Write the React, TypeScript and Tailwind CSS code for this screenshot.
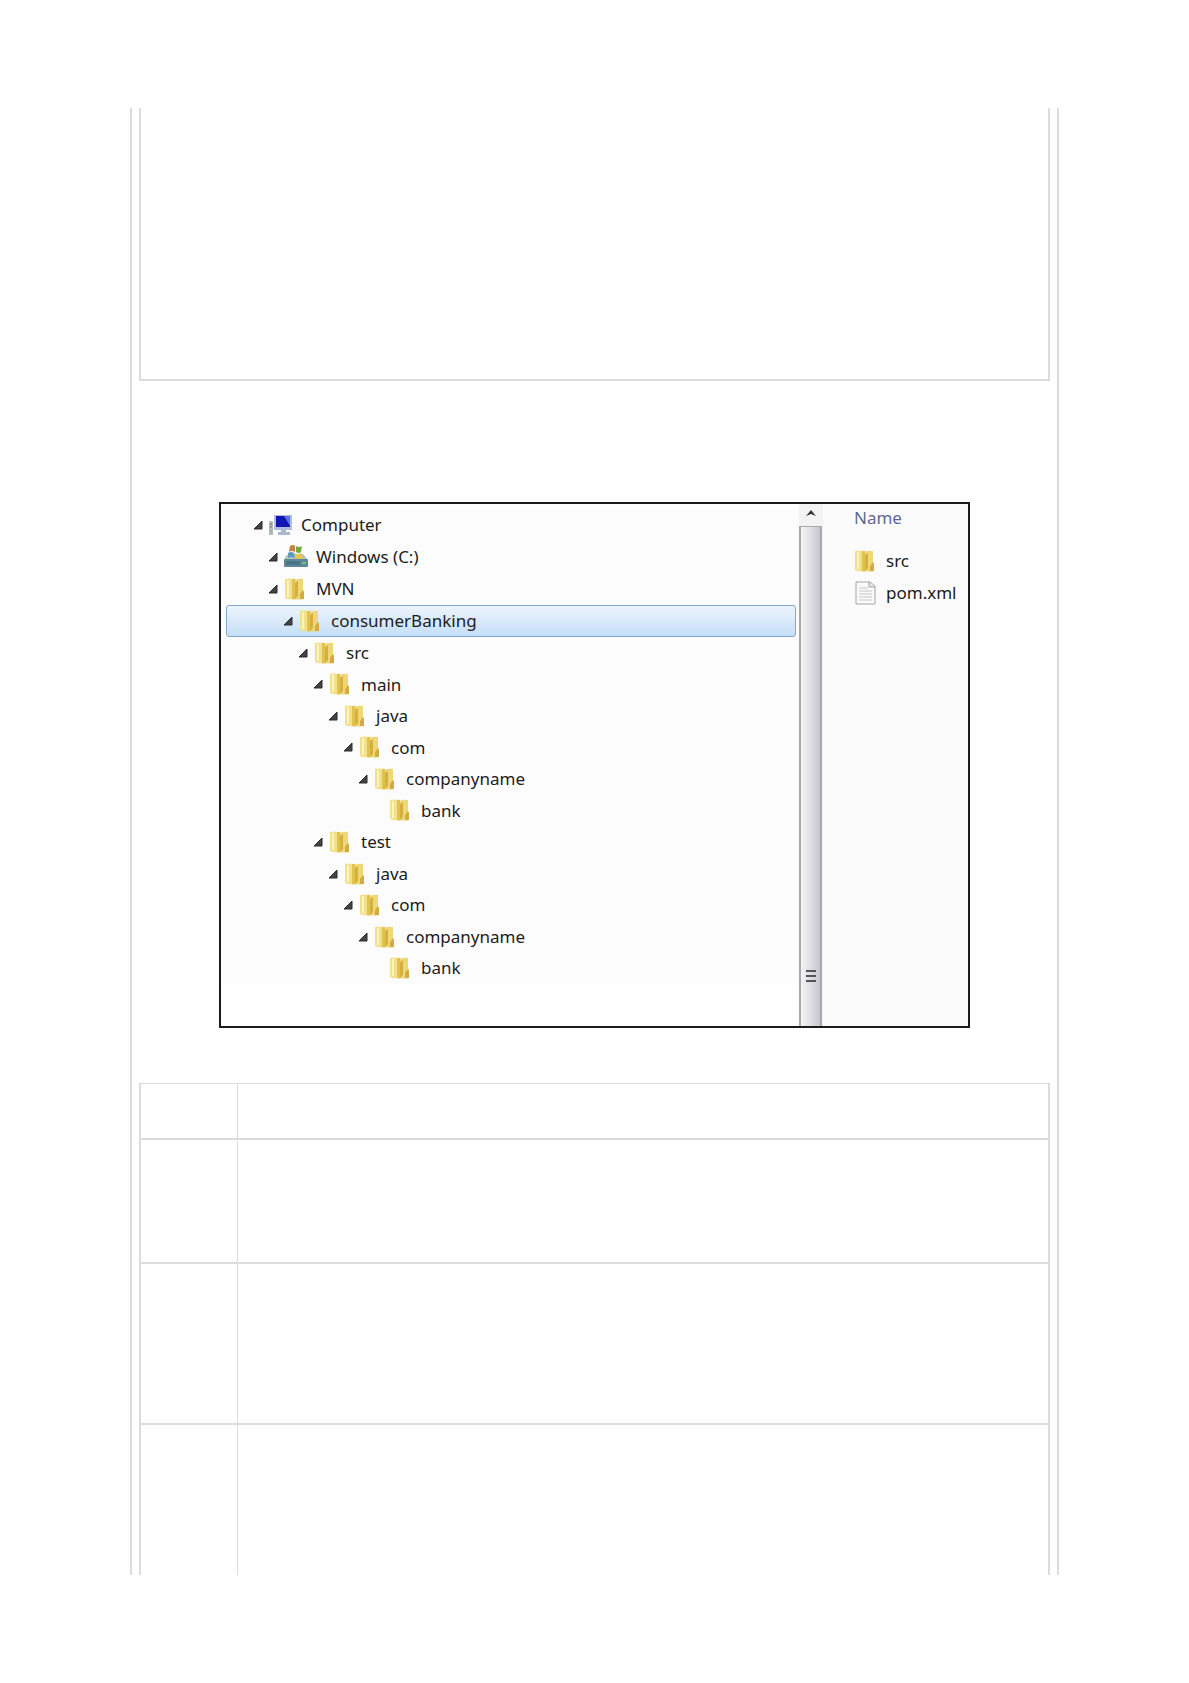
import React from 'react';

type IconKind = 'computer' | 'drive' | 'folder' | 'file';

interface TreeItem {
  label: string;
  depth: number;
  icon: IconKind;
  leaf?: boolean;
  selected?: boolean;
}

const tree: TreeItem[] = [
  { label: 'Computer', depth: 0, icon: 'computer' },
  { label: 'Windows (C:)', depth: 1, icon: 'drive' },
  { label: 'MVN', depth: 1, icon: 'folder' },
  { label: 'consumerBanking', depth: 2, icon: 'folder', selected: true },
  { label: 'src', depth: 3, icon: 'folder' },
  { label: 'main', depth: 4, icon: 'folder' },
  { label: 'java', depth: 5, icon: 'folder' },
  { label: 'com', depth: 6, icon: 'folder' },
  { label: 'companyname', depth: 7, icon: 'folder' },
  { label: 'bank', depth: 8, icon: 'folder', leaf: true },
  { label: 'test', depth: 4, icon: 'folder' },
  { label: 'java', depth: 5, icon: 'folder' },
  { label: 'com', depth: 6, icon: 'folder' },
  { label: 'companyname', depth: 7, icon: 'folder' },
  { label: 'bank', depth: 8, icon: 'folder', leaf: true },
];

const indents = ['pl-[26px]', 'pl-[41px]', 'pl-[56px]', 'pl-[71px]', 'pl-[86px]', 'pl-[101px]', 'pl-[116px]', 'pl-[131px]', 'pl-[146px]'];

const rowHeights = ['h-[55px]', 'h-[124px]', 'h-[161px]', 'h-[151px]'];

function Icon({ kind }: { kind: IconKind }) {
  if (kind === 'computer') {
    return (
      <svg viewBox="0 0 24 24" className="size-6 shrink-0" aria-hidden="true">
        <rect x="0" y="8" width="4" height="14" rx="1" fill="#b4b9bd" />
        <path d="M1 11h2M1 14h2" stroke="#6f777e" />
        <path d="M1 18h2" stroke="#7fbf7f" />
        <rect x="5" y="2" width="18" height="15" fill="#b3bcde" />
        <rect x="7" y="3" width="14" height="11" fill="#1016b0" />
        <path d="M15 3h6v10z" fill="#5873e8" />
        <path d="M12 17h5v2h4v3H9v-3h3z" fill="#a9b8d0" />
      </svg>
    );
  }
  if (kind === 'drive') {
    return (
      <svg viewBox="0 0 24 24" className="size-6 shrink-0" aria-hidden="true">
        <path d="M2 11l3-2h14l5 6H0z" fill="#b3c1c4" />
        <rect x="0" y="14" width="24" height="8" rx="1" fill="#5f8799" />
        <path d="M2 17h14M2 19h14" stroke="#3b6073" />
        <rect x="18" y="17" width="4" height="2" fill="#6fc47a" />
        <path d="M6 1q3-2 5 0v6q-3-2-6 0z" fill="#c9813f" />
        <path d="M12 1q3 2 6 0l-1 6q-2 2-5 0z" fill="#7aa83f" />
        <path d="M4 8q3-2 6 0l1 5q-4-2-7 0z" fill="#5c9ac0" />
        <path d="M11 8q3 2 6 0l2 5q-4 2-8 0z" fill="#e3c94e" />
      </svg>
    );
  }
  if (kind === 'file') {
    return (
      <svg viewBox="0 0 24 24" className="size-6 shrink-0" aria-hidden="true">
        <path d="M2 1h14l5 4v18H2z" fill="#fafafa" stroke="#a2a5a8" />
        <path d="M15 1v5h6" fill="#e3e5e6" stroke="#a2a5a8" />
        <path d="M5 7h9M5 10h13M5 13h13M5 16h13M5 19h13" stroke="#c3c6c9" />
      </svg>
    );
  }
  return (
    <svg viewBox="0 0 24 24" className="size-6 shrink-0" aria-hidden="true">
      <path d="M1 2q4-1 8 0v20q-4 1-8-1z" fill="#f2e08a" />
      <path d="M8 2q2-1 4 1v19q-2 1-4 0z" fill="#e2c24f" />
      <path d="M11 3q4-2 8-1v11l1 2v7q-4 1-9 0z" fill="#eed778" />
      <path d="M11 6l3-2v15l-3 3z" fill="#d6b03c" />
      <path d="M16 17l3-4 1 2v7h-4z" fill="#d2ab42" />
      <path d="M4 3v17" stroke="#faf3c2" strokeWidth="2" />
    </svg>
  );
}

function Expander({ hidden }: { hidden?: boolean }) {
  return (
    <svg viewBox="0 0 10 10" className={hidden ? 'invisible size-[10px] shrink-0' : 'size-[10px] shrink-0'} aria-hidden="true">
      <path d="M9 1v8H1z" fill="#444" stroke="#2a2a2a" />
    </svg>
  );
}

function FolderTree() {
  return (
    <ul className="grid h-[475px] min-w-0 flex-1 grid-rows-[repeat(4,32px)_repeat(11,1fr)] bg-[#fcfcfc] pr-[3px] pl-[5px]">
      {tree.map((item, i) => (
        <li key={i} className="flex min-w-0">
          <button
            type="button"
            className={`flex w-full items-center rounded-[3px] border text-left ${indents[item.depth]} ${
              item.selected ? 'border-[#86a9c9] bg-linear-to-b from-[#edf4fc] to-[#c5dff9]' : 'border-transparent'
            }`}
          >
            <Expander hidden={item.leaf} />
            <span className="ml-[6px] flex items-center gap-2">
              <Icon kind={item.icon} />
              {item.label}
            </span>
          </button>
        </li>
      ))}
    </ul>
  );
}

function ScrollBar() {
  return (
    <div className="flex w-6 flex-col bg-[#f3f3f3]">
      <button type="button" aria-label="Scroll up" className="flex h-[22px] items-center justify-center pb-1">
        <svg viewBox="0 0 12 8" className="h-2 w-3" aria-hidden="true">
          <path d="M1 7l5-6 5 6-5-2z" fill="#333" />
        </svg>
      </button>
      <div className="flex w-[23px] flex-1 flex-col items-center justify-end gap-[3px] border-x-2 border-t border-[#a9a9ab] bg-linear-to-r from-[#f4f4f5] via-[#dfdfe4] to-[#c6c6cf] pb-[44px]">
        <span className="h-[2px] w-[10px] bg-[#555]" />
        <span className="h-[2px] w-[10px] bg-[#555]" />
        <span className="h-[2px] w-[10px] bg-[#555]" />
      </div>
    </div>
  );
}

function FileList() {
  return (
    <section className="w-[145px] bg-[#fbfbfb] pl-[31px]">
      <h2 className="h-7 leading-7 text-[#5c6a92]">Name</h2>
      <ul className="mt-[13px]">
        <li className="flex h-8 items-center gap-2">
          <Icon kind="folder" />
          src
        </li>
        <li className="flex h-8 items-center gap-2">
          <Icon kind="file" />
          pom.xml
        </li>
      </ul>
    </section>
  );
}

export default function App() {
  return (
    <main className="min-h-screen bg-white px-[130px] py-[108px]">
      <div className="border-x-2 border-[#dcdcdc] px-[7px]">
        <div className="h-[273px] border-2 border-t-0 border-[#dcdcdc]" />

        <div className="mx-20 mt-[121px] flex h-[526px] border-2 border-[#1c1c1c] bg-white font-['Noto_Sans','Open_Sans',sans-serif] text-[17px] text-[#1c1c1c]">
          <div className="flex min-w-0 flex-1 items-start pt-[5px]">
            <FolderTree />
          </div>
          <ScrollBar />
          <FileList />
        </div>

        <table className="mt-[55px] w-full table-fixed border-collapse border-x-2 border-t border-[#dcdcdc]">
          <colgroup>
            <col className="w-[97px]" />
            <col />
          </colgroup>
          <tbody>
            {rowHeights.map((height, i) => (
              <tr key={i} className={i > 0 ? 'border-t-2 border-[#dcdcdc]' : ''}>
                <td className={`border-r border-[#dcdcdc] ${height}`} />
                <td />
              </tr>
            ))}
          </tbody>
        </table>
      </div>
    </main>
  );
}
